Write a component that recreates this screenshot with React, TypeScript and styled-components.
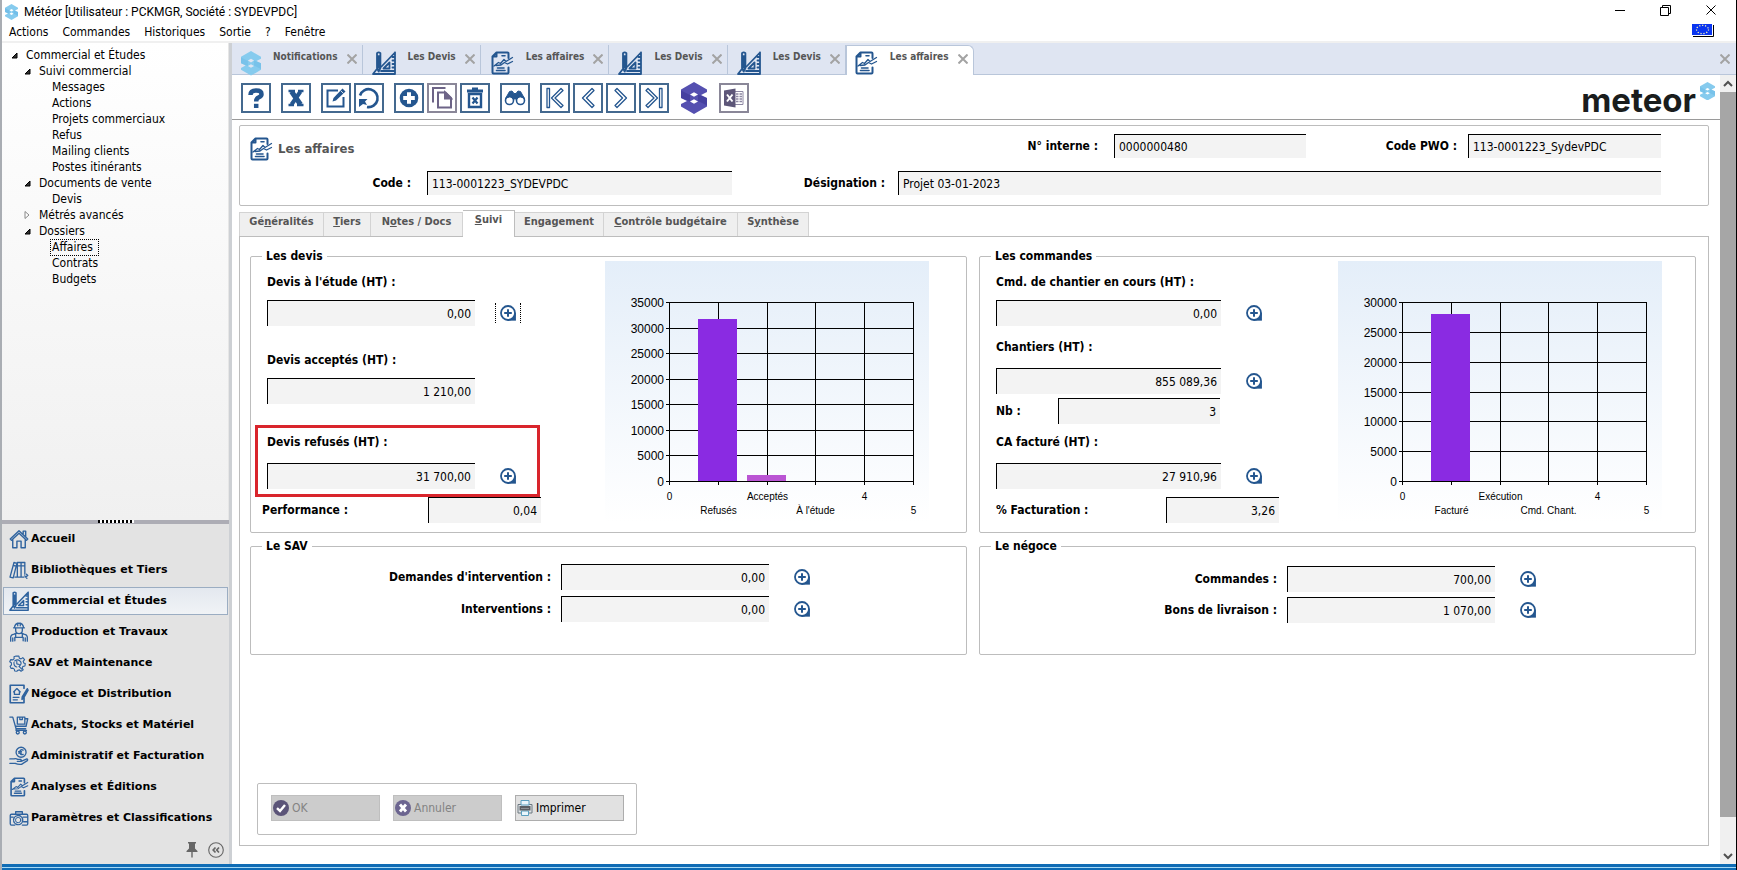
import React, { useId, useState } from "react";
import styled, { createGlobalStyle, css } from "styled-components";

const BLUE = "#24568f";
const LINE = "#bdbdbd";
const UI_FONT = '"DejaVu Sans Condensed", "DejaVu Sans", Tahoma, sans-serif';

const GlobalStyle = createGlobalStyle`
  * { box-sizing: border-box; }
  body {
    margin: 0;
    background: #fff;
    color: #000;
    font-family: ${UI_FONT};
    font-size: 12px;
    line-height: 16px;
  }
  button, input { font: inherit; color: inherit; }
  button { margin: 0; padding: 0; border: 0; background: none; cursor: pointer; }
  a { color: inherit; text-decoration: none; }
  svg { display: block; flex: none; }
`;

/* ---------- Icons ---------- */

type IconProps = { size?: number; color?: string };

const BrandMark = ({ width, color, dark }: { width: number; color: string; dark: string }) => (
  <svg width={width} viewBox="0 0 26 32" aria-hidden="true">
    <path fill={color} fillRule="evenodd" d="M13 0 26 7.5V10L20 13 26 16V24.5L13 32 0 24.5V22L6 19 0 16V7.5ZM9 12.5 13 14.8 17 12.5 13 10.200ZM9 19.5 13 21.800 17 19.5 13 17.200Z" />
    <path fill={dark} d="M0 8.500 9 13V19.500L0 16ZM26 23.500 17 19V12.500L26 16Z" opacity=".5" />
  </svg>
);

const Glyph = ({ size = 24, color = BLUE, w = 1.8, children }: IconProps & { w?: number; children: React.ReactNode }) => (
  <svg
    width={size}
    height={size}
    viewBox="0 0 24 24"
    fill="none"
    stroke={color}
    strokeWidth={w}
    strokeLinejoin="round"
    strokeLinecap="round"
    aria-hidden="true"
  >
    {children}
  </svg>
);

const SquareIcon = (p: IconProps) => (
  <Glyph {...p}>
    <path d="M5 2.2Q6.7.6 8.4 2.2V17L6.7 20.5 5 17ZM5 5.2h3.4M5 16.5h3.4M6.7 6v10" />
    <path d="M23 1.5V23H1L4.5 18.5M9.5 15.5 23 1.5M20.5 6h2M20.5 9.5h2M20.5 13h2M20.5 16.5h2M9 20h14" />
    <path d="M17.5 11.5v6h-6Z" />
  </Glyph>
);

const AnalysisIcon = (p: IconProps) => (
  <Glyph {...p} w={1.600}>
    <path d="M18.500 7V2.500Q18.500 1.500 17.500 1.500H6.500L2.500 5.500V21.500Q2.500 22.500 3.500 22.500H17.500Q18.500 22.500 18.500 21.500V16.500M3 5.500H6.500V1.500" strokeWidth="2" />
    <path d="M12 4.800H15M6.500 19.500H15M7.500 17H14" strokeWidth="1.600" />
    <path d="M4 15 8.500 11.500 10.500 12.500 14 8.500 16 10.500 22.500 6.500M6 14.500 11 14 14.500 11.500 17.500 13 22.500 10.500" strokeWidth="1.300" />
  </Glyph>
);

const HomeIcon = (p: IconProps) => (
  <Glyph {...p} w={1.7}>
    <path d="M1.5 12 12 2 22.5 12 21 13.5 12 5 3 13.5ZM4.5 12.5V22.5H9.5V14.5H14.5V22.5H19.5V12.5M17 6V2.5H20V9" />
  </Glyph>
);

const BooksIcon = (p: IconProps) => (
  <Glyph {...p} w={1.6}>
    <path d="M6 3 9.5 4 5 21.5 1.2 20.5ZM10 3H14.5V20.5H10ZM14.5 3H19V17M14.5 20.5H18M10 7H19M5 6.5l3.7 1M7 20.5H10" />
    <path d="M19 19l2.5 3M21 17l1.5 1.5L20 20.5" />
  </Glyph>
);

const WorkerIcon = (p: IconProps) => (
  <Glyph {...p} w={1.6}>
    <path d="M6.5 7Q7 1.5 12 1.5T17.500 7ZM5.500 7H18.500M8 7.500V10Q8 14 12 14T16 10V7.500M10.500 1.500V4.500M13.500 1.500V4.500" />
    <path d="M2 23V18Q2.500 15 6 14.500L9 13.500M22 23V18Q21.500 15 18 14.500L15 13.500M8 14.500V18.500H16V14.500M7 18.500V22.500M17 18.500V22.500M4.500 19v4M19.500 19v4" />
  </Glyph>
);

const GearIcon = (p: IconProps) => (
  <Glyph {...p} w={1.6}>
    <path d="M10 1.500H14L14.600 4.500 17 5.500 19.500 3.800 22 6.500 20 9 21 11.500 23 12 22.500 15.500 19.800 16 18.500 18.500 20 21 17 23 14.800 21 12.500 21.500 11 23 8 22.500 7.500 20 5.500 18.500 3 19 1.500 16 3.500 14 3.300 11 1 9.500 2.500 6.500 5.500 6.800 7.300 5 7 2.500Z" />
    <path d="M8 8.500Q12 5.500 15.500 8.500T15 15.500M7 10.500Q6.500 15.500 11 17M11 9V12.500L14.500 13.500M14 16l4 4" />
  </Glyph>
);

const ContractIcon = (p: IconProps) => (
  <Glyph {...p} w={1.6}>
    <path d="M18 5V1.500H1.500V22.500H18V17" strokeWidth="2" />
    <path d="M5.500 9.500 9.500 5.500 13.500 9.500M6.500 9V12.500H12.500V9M5 16H12M5 19H10" />
    <path d="M22 5.500 23 7.500 17.500 17 15.500 18.500 15.800 15.500Z" fill={p.color ?? BLUE} />
  </Glyph>
);

const CartIcon = (p: IconProps) => (
  <Glyph {...p} w={1.6}>
    <path d="M1 2.500H4.500L8.500 16.500H20M7.500 13.500H20.500L22.500 4.500H20M10 2.500H19V11H10ZM13 2.500V5.500H16V2.500M8.500 16.500V18.500H21" />
    <circle cx="10.500" cy="21" r="1.800" />
    <circle cx="19" cy="21" r="1.800" />
  </Glyph>
);

const CoinHandIcon = (p: IconProps) => (
  <Glyph {...p} w={1.6}>
    <circle cx="14.500" cy="7.500" r="6" />
    <path d="M17 5Q14 3.500 12.800 7 13.500 11.500 17 10M11.500 6.800H15M11.500 8.500H15" />
    <path d="M1 15.500H6Q8 14.500 10.500 16H14Q15.500 17.500 13.500 18.500H10M14.500 18.500 21.500 15.500Q23 16 22 17.500L15 22Q11 22.500 7.500 20.800H1" />
  </Glyph>
);

const SettingsCaseIcon = (p: IconProps) => (
  <Glyph {...p} w={1.600}>
    <path d="M8 7.500V4.500H16V7.500M7 20.500H3Q1.500 20.500 1.500 19V9Q1.500 7.500 3 7.500H21Q22.500 7.500 22.500 9V19Q22.500 20.500 21 20.500H16M1.500 11H5M17 11H22.500M17.500 16.500H22.500" />
    <circle cx="11" cy="14.500" r="5.500" strokeDasharray="3 1.300" />
    <circle cx="11" cy="14.500" r="3.200" strokeWidth="1.200" />
  </Glyph>
);

const CloseGlyph = ({ size = 10, color = "#a3a3a3", w = 2 }: IconProps & { w?: number }) => (
  <svg width={size} height={size} viewBox="0 0 10 10" stroke={color} strokeWidth={w} aria-hidden="true">
    <path d="M.5.5 9.500 9.500M9.500.500.500 9.500" />
  </svg>
);

const ZoomPlusIcon = () => (
  <svg width="16" height="16" viewBox="0 0 16 16" aria-hidden="true">
    <path d="M8 15.200H15.800V8Z" fill={BLUE} stroke={BLUE} strokeWidth=".8" strokeLinejoin="round" />
    <circle cx="8" cy="8" r="7" fill="#fff" stroke={BLUE} strokeWidth="1.800" />
    <path d="M8 4.200V11.800M4.200 8H11.800" stroke={BLUE} strokeWidth="2" />
  </svg>
);

/* ---------- Window frame ---------- */

const Window = styled.div`
  display: flex;
  flex-direction: column;
  min-height: 100vh;
  border-left: 2px solid #a9adb3;
  border-right: 1px solid #000;
  background: #fff;
`;

const TitleBar = styled.header`
  display: flex;
  align-items: center;
  height: 24px;
  padding: 0 14px 0 3px;
  gap: 6px;
  font-family: Roboto, "Segoe UI", sans-serif;
`;

const WindowTitle = styled.h1`
  flex: 1;
  margin: 0;
  font-size: 12px;
  font-weight: 400;
`;

const WindowButtons = styled.div`
  display: flex;
  align-items: center;
  gap: 35px;
  padding: 0 6px 4px 0;
`;

const PlainButton = styled.button`
  display: grid;
  place-items: center;
`;

const MenuBar = styled.nav`
  display: flex;
  align-items: flex-start;
  justify-content: space-between;
  height: 17px;
  padding: 0 22px 0 7px;
`;

const MenuList = styled.div`
  display: flex;
  gap: 14px;
`;

const Body = styled.div`
  display: flex;
  flex: 1;
  border-top: 2px solid #f0f0f0;
`;

const StatusEdge = styled.footer`
  height: 6px;
  border: solid #0f6cb5;
  border-width: 3px 0 2px;
  background: #a5d8f5;
`;

/* ---------- Sidebar ---------- */

const Sidebar = styled.aside`
  display: flex;
  flex-direction: column;
  flex: none;
  width: 230px;
  border-right: 3px solid #cdd0d4;
`;

const TreePane = styled.div`
  flex: 1;
  padding: 4px 0;
  border-right: 1px solid #e6e6e6;
  background: linear-gradient(#fff, #f0f0f0);
`;

const TreeList = styled.ul`
  margin: 0;
  padding: 0;
  list-style: none;
`;

const TreeItem = styled.a<{ $level: number; $current?: boolean }>`
  display: flex;
  align-items: center;
  width: max-content;
  height: 16px;
  padding-left: ${(p) => 8 + p.$level * 13}px;
  span {
    padding: 0 5px 0 1px;
    line-height: 15px;
    outline: ${(p) => (p.$current ? "1px dotted #000" : "none")};
  }
`;

const TreeArrow = styled.svg`
  width: 8px;
  height: 8px;
  margin-right: 7px;
`;

const ArrowSpace = styled.i`
  width: 15px;
`;

const Splitter = styled.div`
  display: flex;
  justify-content: center;
  height: 4px;
  background: #adadb5;
  &::after {
    content: "";
    width: 36px;
    height: 3px;
    background: repeating-linear-gradient(100deg, #000 0 2px, #fff 2px 4px);
  }
`;

const ModuleList = styled.nav`
  display: flex;
  flex-direction: column;
  gap: 3px;
  padding-top: 1px;
  background: #e3e3e3;
`;

const ModuleLink = styled.a<{ $active?: boolean }>`
  display: flex;
  align-items: center;
  gap: 2px;
  height: 28px;
  margin: 0 1px;
  padding-left: 5px;
  border: 1px solid transparent;
  font-family: "DejaVu Sans", Verdana, sans-serif;
  font-size: 11px;
  font-weight: 700;
  ${(p) =>
    p.$active &&
    css`
      border-color: #9badc2;
      background: linear-gradient(#e3e8ef, #f0f3f6);
    `}
`;

const ModuleFooter = styled.div`
  display: flex;
  justify-content: flex-end;
  align-items: center;
  gap: 10px;
  height: 32px;
  padding: 4px 5px 0;
  background: #e3e3e3;
`;

/* ---------- Workspace ---------- */

const Workspace = styled.main`
  display: flex;
  flex: 1;
  flex-direction: column;
  min-width: 0;
`;

const DocTabs = styled.div`
  display: flex;
  align-items: stretch;
  height: 32px;
  padding-right: 6px;
  border-bottom: 1px solid #b9c6da;
  background: #dfe5f2;
`;

const DocTab = styled.div<{ $active?: boolean }>`
  display: flex;
  align-items: flex-start;
  margin-top: 2px;
  padding: 5px 5px 0 9px;
  border-right: 1px solid #b9c6da;
  ${(p) =>
    p.$active &&
    css`
      margin-bottom: -1px;
      border: 1px solid #b9c6da;
      border-bottom: 0;
      border-radius: 0 6px 0 0;
      padding: 4px 5px 0 7px;
      background: #fff;
    `}
`;

const DocTabTitle = styled.a`
  display: flex;
  gap: 12px;
  color: #555;
  font-size: 10px;
  font-weight: 700;
  line-height: 14px;
  svg { margin-top: 1px; }
`;

const DocTabClose = styled(PlainButton)`
  margin: 4px 0 0 9px;
`;

const DocTabsEnd = styled(PlainButton)`
  align-self: center;
  margin-left: auto;
`;

const Content = styled.div`
  display: flex;
  flex: 1;
`;

const Page = styled.div`
  display: flex;
  flex: 1;
  flex-direction: column;
  min-width: 0;
`;

const Toolbar = styled.div`
  display: flex;
  align-items: center;
  gap: 10px;
  height: 45px;
  padding: 1px 5px 0 9px;
  border-bottom: 1px solid #9a9a9a;
`;

const ToolGroup = styled.div`
  display: flex;
  gap: 3px;
`;

const ToolButton = styled.button<{ $muted?: boolean }>`
  display: grid;
  place-items: center;
  width: 30px;
  height: 30px;
  border: 2px solid ${(p) => (p.$muted ? "#8a8798" : "#44698f")};
  background: #fff;
`;

const BrandButton = styled(PlainButton)`
  width: 30px;
`;

const Logo = styled.div`
  display: flex;
  align-items: flex-start;
  gap: 4px;
  margin: 4px 0 0 auto;
  color: #1a1d1d;
  font: 700 33px/36px Inter, sans-serif;
`;

const ScrollTrack = styled.div`
  display: flex;
  flex: none;
  flex-direction: column;
  width: 16px;
  background: #f0f0f0;
  button { height: 17px; }
`;

const ScrollThumb = styled.div`
  flex: 1;
  margin-bottom: 30px;
  background: #a6a6a6;
`;

const HeaderCard = styled.section`
  margin: 5px 11px 0 7px;
  padding: 8px 47px 10px 9px;
  border: 1px solid ${LINE};
  border-radius: 2px;
`;

const HeaderRow = styled.div<{ $top?: number }>`
  display: flex;
  align-items: center;
  height: 24px;
  margin-top: ${(p) => p.$top ?? 0}px;
`;

const HeaderTitle = styled.h2`
  display: flex;
  flex: 1;
  align-items: center;
  gap: 5px;
  margin: 6px 0 0;
  color: #555;
  font-size: 13px;
`;

const Label = styled.label<{ $width?: number; $align?: string }>`
  display: block;
  flex: none;
  width: ${(p) => (p.$width ? `${p.$width}px` : "auto")};
  text-align: ${(p) => p.$align ?? "left"};
  font-weight: 700;
`;

const Field = styled.input<{ $width?: number; $tall?: boolean; $left?: number; $numeric?: boolean }>`
  flex: ${(p) => (p.$width ? "none" : 1)};
  width: ${(p) => (p.$width ? `${p.$width}px` : "auto")};
  min-width: 0;
  height: ${(p) => (p.$tall ? 26 : 24)}px;
  margin-left: ${(p) => p.$left ?? 0}px;
  padding: 1px 4px 0;
  border: solid #000;
  border-width: 1px 0 0 1px;
  border-radius: 0;
  outline: 0;
  background: #f3f3f3;
  text-align: ${(p) => (p.$numeric ? "right" : "left")};
`;

const PageTabs = styled.div`
  display: flex;
  align-items: flex-end;
  margin: 4px 11px 0 7px;
`;

const PageTab = styled.button<{ $width: number; $active?: boolean }>`
  width: ${(p) => p.$width}px;
  height: 24px;
  padding-bottom: 6px;
  border: 1px solid #d3d3d3;
  border-width: 1px 1px 0 0;
  background: #efefef;
  color: #555;
  font-size: 11px;
  font-weight: 700;
  white-space: nowrap;
  &:first-child { border-left-width: 1px; }
  ${(p) =>
    p.$active &&
    css`
      position: relative;
      height: 27px;
      margin-bottom: -1px;
      padding-bottom: 9px;
      border-color: ${LINE};
      background: #fff;
    `}
`;

const PagePanel = styled.div`
  display: flex;
  flex: 1;
  flex-direction: column;
  margin: 0 11px 18px 7px;
  padding: 11px 12px 10px 10px;
  border: 1px solid ${LINE};
`;

const GroupGrid = styled.div`
  display: grid;
  grid-template-columns: 1fr 1fr;
  gap: 5px 12px;
`;

const Group = styled.fieldset<{ $tall?: boolean }>`
  display: flex;
  min-width: 0;
  min-height: ${(p) => (p.$tall ? 285 : 117)}px;
  margin: 0;
  padding: 0;
  border: 1px solid ${LINE};
  border-radius: 2px;
`;

const Legend = styled.legend`
  margin-left: 11px;
  padding: 0 4px;
  font-weight: 700;
`;

const AmountColumn = styled.div<{ $width: number }>`
  flex: none;
  width: ${(p) => p.$width}px;
  padding: 10px 0 0 16px;
`;

const Amount = styled.div<{ $top?: number; $marked?: boolean }>`
  position: relative;
  margin-top: ${(p) => p.$top ?? 0}px;
  ${(p) =>
    p.$marked &&
    css`
      &::after {
        content: "";
        position: absolute;
        inset: -9px 65px -8px -12px;
        border: 3px solid #d9252c;
        pointer-events: none;
      }
    `}
`;

const AmountLine = styled.div<{ $top?: number }>`
  display: flex;
  align-items: center;
  gap: 20px;
  margin-top: ${(p) => p.$top ?? 0}px;
`;

const InlineAmount = styled.div<{ $top?: number; $shift?: boolean }>`
  display: flex;
  align-items: center;
  margin-top: ${(p) => p.$top ?? 0}px;
  margin-left: ${(p) => (p.$shift ? -5 : 0)}px;
`;

const DetailButton = styled.button<{ $focused?: boolean }>`
  display: grid;
  place-items: center;
  width: 26px;
  height: 20px;
  border: dotted ${(p) => (p.$focused ? "#000" : "transparent")};
  border-width: 0 1px;
`;

const LinePanel = styled.div<{ $top: number; $gap: number }>`
  display: flex;
  flex: 1;
  flex-direction: column;
  gap: ${(p) => p.$gap}px;
  padding-top: ${(p) => p.$top}px;
`;

const Line = styled.div`
  display: flex;
  align-items: center;
  gap: 10px;
  button { margin-left: 10px; }
`;

const ChartSvg = styled.svg`
  margin-top: -3px;
  font-family: "Liberation Sans", Arial, sans-serif;
`;

const ActionBar = styled.div`
  display: flex;
  align-self: flex-start;
  gap: 13px;
  margin-top: auto;
  margin-left: 7px;
  padding: 11px 12px 13px 13px;
  border: 1px solid ${LINE};
  border-radius: 2px;
`;

const ActionButton = styled.button`
  display: flex;
  align-items: center;
  gap: 3px;
  width: 109px;
  height: 26px;
  padding-left: 1px;
  border: 1px solid #adadad;
  background: #e1e1e1;
  &:disabled {
    border-color: #bfbfbf;
    background: #ccc;
    color: #838383;
  }
`;

/* ---------- Data ---------- */

type Node = { label: string; level: number; open?: boolean; current?: boolean };

const tree: Node[] = [
  { label: "Commercial et Études", level: 0, open: true },
  { label: "Suivi commercial", level: 1, open: true },
  { label: "Messages", level: 2 },
  { label: "Actions", level: 2 },
  { label: "Projets commerciaux", level: 2 },
  { label: "Refus", level: 2 },
  { label: "Mailing clients", level: 2 },
  { label: "Postes itinérants", level: 2 },
  { label: "Documents de vente", level: 1, open: true },
  { label: "Devis", level: 2 },
  { label: "Métrés avancés", level: 1, open: false },
  { label: "Dossiers", level: 1, open: true },
  { label: "Affaires", level: 2, current: true },
  { label: "Contrats", level: 2 },
  { label: "Budgets", level: 2 },
];

const modules = [
  { label: "Accueil", Icon: HomeIcon },
  { label: "Bibliothèques et Tiers", Icon: BooksIcon },
  { label: "Commercial et Études", Icon: SquareIcon, active: true },
  { label: "Production et Travaux", Icon: WorkerIcon },
  { label: "SAV et Maintenance", Icon: GearIcon, size: 17 },
  { label: "Négoce et Distribution", Icon: ContractIcon },
  { label: "Achats, Stocks et Matériel", Icon: CartIcon },
  { label: "Administratif et Facturation", Icon: CoinHandIcon },
  { label: "Analyses et Éditions", Icon: AnalysisIcon },
  { label: "Paramètres et Classifications", Icon: SettingsCaseIcon },
];

const docTabs = [
  { label: "Notifications", kind: "brand" },
  { label: "Les Devis", kind: "square" },
  { label: "Les affaires", kind: "analysis" },
  { label: "Les Devis", kind: "square" },
  { label: "Les Devis", kind: "square" },
  { label: "Les affaires", kind: "analysis" },
];

const pageTabs: { text: [string, string, string]; width: number }[] = [
  { text: ["Gé", "n", "éralités"], width: 85 },
  { text: ["", "T", "iers"], width: 47 },
  { text: ["N", "o", "tes / Docs"], width: 92 },
  { text: ["", "S", "uivi"], width: 52 },
  { text: ["En", "g", "agement"], width: 89 },
  { text: ["", "C", "ontrôle budgétaire"], width: 134 },
  { text: ["S", "y", "nthèse"], width: 71 },
];

/* ---------- Parts ---------- */

const DocIcon = ({ kind }: { kind: string }) => {
  if (kind === "brand") return <BrandMark width={20} color="#86cbee" dark="#6ab9e6" />;
  return kind === "square" ? <SquareIcon size={24} /> : <AnalysisIcon size={24} />;
};

const Detail = ({ name, focused }: { name: string; focused?: boolean }) => (
  <DetailButton type="button" aria-label={`Détail : ${name}`} $focused={focused}>
    <ZoomPlusIcon />
  </DetailButton>
);

type AmountProps = {
  label: string;
  value: string;
  width: number;
  top?: number;
  gap?: number;
  marked?: boolean;
  detail?: boolean;
  focused?: boolean;
};

const AmountField = ({ label, value, width, top, gap = 10, marked, detail, focused }: AmountProps) => {
  const id = useId();
  return (
    <Amount $top={top} $marked={marked}>
      <Label htmlFor={id}>{label} :</Label>
      <AmountLine $top={gap}>
        <Field id={id} readOnly value={value} $width={width} $tall $numeric />
        {detail && <Detail name={label} focused={focused} />}
      </AmountLine>
    </Amount>
  );
};

type InlineProps = { label: string; value: string; labelWidth: number; width: number; top?: number; shift?: boolean };

const InlineField = ({ label, value, labelWidth, width, top, shift }: InlineProps) => {
  const id = useId();
  return (
    <InlineAmount $top={top} $shift={shift}>
      <Label htmlFor={id} $width={labelWidth}>{label} :</Label>
      <Field id={id} readOnly value={value} $width={width} $tall $numeric />
    </InlineAmount>
  );
};

const LineField = ({ label, value, labelWidth }: { label: string; value: string; labelWidth: number }) => {
  const id = useId();
  return (
    <Line>
      <Label htmlFor={id} $width={labelWidth} $align="right">{label} :</Label>
      <Field id={id} readOnly value={value} $width={208} $tall $numeric />
      <Detail name={label} />
    </Line>
  );
};

type ChartProps = { max: number; labels: string[]; bars: { value: number; color: string }[] };

const BarChart = ({ max, labels, bars }: ChartProps) => {
  const gradient = useId();
  const left = 64;
  const right = 308;
  const top = 41;
  const bottom = 220;
  const xAt = (i: number) => Math.round(left + ((right - left) * i) / 5) + 0.5;
  const yAt = (v: number) => Math.round(bottom - ((bottom - top) * v) / max) + 0.5;
  const steps = Array.from({ length: max / 5000 + 1 }, (_, i) => i * 5000);
  return (
    <ChartSvg width="324" height="262" viewBox="0 0 324 262" role="img" aria-label={labels.join(", ")}>
      <defs>
        <linearGradient id={gradient} x1="0" y1="0" x2="0" y2="1">
          <stop offset="0" stopColor="#e4eef9" />
          <stop offset="1" stopColor="#fff" />
        </linearGradient>
      </defs>
      <rect width="324" height="262" fill={`url(#${gradient})`} />
      <g stroke="#000" strokeWidth="1">
        {steps.map((v) => (
          <line key={v} x1={left - 3} x2={right + 1} y1={yAt(v)} y2={yAt(v)} />
        ))}
        {labels.map((_, i) => (
          <line key={i} x1={xAt(i)} x2={xAt(i)} y1={top} y2={bottom + 4} />
        ))}
      </g>
      {bars.map((b, i) => (
        <rect key={i} x={xAt(i + 1) - 20.5} width="39" y={yAt(b.value) - 0.5} height={bottom - yAt(b.value) + 0.5} fill={b.color} />
      ))}
      <g fontSize="12" textAnchor="end">
        {steps.map((v) => (
          <text key={v} x="59" y={yAt(v) + 4}>{v}</text>
        ))}
      </g>
      <g fontSize="10" textAnchor="middle">
        {labels.map((t, i) => (
          <text key={i} x={xAt(i)} y={i % 2 ? 253 : 239}>{t}</text>
        ))}
      </g>
    </ChartSvg>
  );
};

const SidebarTree = () => (
  <TreePane>
    <TreeList>
      {tree.map((n) => (
        <li key={n.label}>
          <TreeItem href="#" $level={n.level} $current={n.current}>
            {n.open === undefined ? (
              <ArrowSpace />
            ) : (
              <TreeArrow viewBox="0 0 8 8" aria-hidden="true">
                {n.open ? <path d="M7 2V7H2Z" fill="#333" stroke="#000" /> : <path d="M2 .500 6 4 2 7.500Z" fill="#fff" stroke="#888" />}
              </TreeArrow>
            )}
            <span>{n.label}</span>
          </TreeItem>
        </li>
      ))}
    </TreeList>
  </TreePane>
);

const ChevronShape = ({ dir, bar }: { dir: "left" | "right"; bar?: boolean }) => (
  <svg width="24" height="24" viewBox="0 0 24 24" fill="#fff" stroke={BLUE} strokeWidth="1.300" strokeLinejoin="round" aria-hidden="true">
    <g transform={dir === "right" ? "matrix(-1 0 0 1 24 0)" : undefined}>
      <path d={bar ? "M18 2.500 20 4.500 12 12 20 19.500 18 21.500 8.500 12Z" : "M16 2.500 18 4.500 10.500 12 18 19.500 16 21.500 6.500 12Z"} />
      {bar && <path d="M4 2.500H6.500V21.500H4Z" />}
    </g>
  </svg>
);

const MainToolbar = () => (
  <Toolbar role="toolbar">
    <ToolButton type="button" aria-label="Aide">
      <svg width="20" height="22" viewBox="0 0 20 22" fill="none" stroke={BLUE} strokeWidth="4.500">
        <path d="M4.500 8Q4.500 3.500 10 3.500T15.500 7.200Q15.500 9.200 12.500 10.500 10.200 11.500 10.200 14.500" />
        <path d="M10.200 16.800V21" />
      </svg>
    </ToolButton>
    <ToolButton type="button" aria-label="Fermer">
      <svg width="18" height="18" viewBox="0 0 18 18" stroke={BLUE}>
        <path d="M4.500 2.500 13.500 15.500" strokeWidth="5" />
        <path d="M13.500 2.500 4.500 15.500" strokeWidth="4" />
        <path d="M1.500 2H8M11 2H16.500M1.500 16H7M10 16H16.500" strokeWidth="2.500" />
      </svg>
    </ToolButton>
    <ToolGroup>
      <ToolButton type="button" aria-label="Modifier">
        <svg width="22" height="22" viewBox="0 0 22 22" fill="none" stroke={BLUE} strokeWidth="2">
          <path d="M13 3.500H2.500V19.500H18.500V10" />
          <path d="M17.500 1.500 20.500 4.500 11 13.500 7.500 14.500 8.500 11Z" fill={BLUE} stroke="none" />
          <path d="M16 4 18.500 6.500" stroke="#fff" strokeWidth=".8" />
        </svg>
      </ToolButton>
      <ToolButton type="button" aria-label="Actualiser">
        <svg width="24" height="24" viewBox="0 0 24 24" fill="none" stroke={BLUE} strokeWidth="2.600">
          <path d="M3 9.500A9 9 0 1 1 10 21" />
          <path d="M2 13H10.500L8 15.500 10 19 6 18 2 21Z" fill={BLUE} stroke="none" />
        </svg>
      </ToolButton>
    </ToolGroup>
    <ToolGroup>
      <ToolButton type="button" aria-label="Ajouter">
        <svg width="20" height="20" viewBox="0 0 20 20">
          <circle cx="10" cy="10" r="9.300" fill={BLUE} />
          <path d="M10 4.200V15.800M4.200 10H15.800" stroke="#fff" strokeWidth="4" />
        </svg>
      </ToolButton>
      <ToolButton type="button" aria-label="Dupliquer" $muted>
        <svg width="22" height="24" viewBox="0 0 22 24" fill="none" stroke="#6d6487" strokeWidth="2">
          <path d="M2 16.500V2H14.500" />
          <path d="M7 6.500H14.500L20 12V21.500H7Z" />
          <path d="M14 6.500V12.500H20Z" fill="#6d6487" />
        </svg>
      </ToolButton>
      <ToolButton type="button" aria-label="Supprimer">
        <svg width="18" height="22" viewBox="0 0 18 22" fill="none" stroke={BLUE}>
          <path d="M1 4H17M6 2H12" strokeWidth="3" />
          <path d="M3 7H15V20H3Z" strokeWidth="2.400" />
          <path d="M6.500 10.500 11.500 16.500M11.500 10.500 6.500 16.500" strokeWidth="2.200" />
        </svg>
      </ToolButton>
    </ToolGroup>
    <ToolButton type="button" aria-label="Rechercher">
      <svg width="22" height="18" viewBox="0 0 22 18" fill="none" stroke={BLUE} strokeWidth="1.600">
        <circle cx="5.500" cy="11.500" r="4" />
        <circle cx="16.500" cy="11.500" r="4" />
        <path d="M1.500 9.500 5.500 2.500 8 2 10 4.500H12L14 2 16.500 2.500 20.500 9.500 16 7.500 12.500 10H9.500L6 7.500Z" fill={BLUE} strokeWidth="1" />
      </svg>
    </ToolButton>
    <ToolGroup>
      <ToolButton type="button" aria-label="Premier"><ChevronShape dir="left" bar /></ToolButton>
      <ToolButton type="button" aria-label="Précédent"><ChevronShape dir="left" /></ToolButton>
      <ToolButton type="button" aria-label="Suivant"><ChevronShape dir="right" /></ToolButton>
      <ToolButton type="button" aria-label="Dernier"><ChevronShape dir="right" bar /></ToolButton>
    </ToolGroup>
    <BrandButton type="button" aria-label="Sydev">
      <BrandMark width={26} color="#5550b0" dark="#37328f" />
    </BrandButton>
    <ToolButton type="button" aria-label="Exporter vers Excel" $muted>
      <svg width="20" height="20" viewBox="0 0 20 20">
        <path d="M10.500 3.500H19V16.500H10.500Z" fill="#fff" stroke="#8d87a3" />
        <path d="M12 6H14.500M15.500 6H18M12 8.500H14.500M15.500 8.500H18M12 11H14.500M15.500 11H18M12 13.500H14.500M15.500 13.500H18" stroke="#8d87a3" strokeWidth="1.500" />
        <path d="M0 2.500 11.500 .500V19.500L0 17.500Z" fill="#5d5678" />
        <path d="M3 6.500 8.500 13.500M8.500 6.500 3 13.500" stroke="#fff" strokeWidth="2" />
      </svg>
    </ToolButton>
    <Logo>
      meteor
      <BrandMark width={15} color="#86cbee" dark="#6ab9e6" />
    </Logo>
  </Toolbar>
);

const EuroFlag = () => (
  <svg width="22" height="13" viewBox="0 0 22 13" aria-hidden="true">
    <path d="M1 12.500H21.500V1" fill="none" stroke="#000" />
    <rect width="20" height="11" fill="#0a35f0" />
    <ellipse cx="10.500" cy="5.500" rx="6" ry="4.200" fill="none" stroke="#fff7b0" strokeWidth="1.200" strokeDasharray="1.200 1.700" />
  </svg>
);

/* ---------- App ---------- */

export default function App() {
  const [tab, setTab] = useState(3);
  return (
    <Window>
      <GlobalStyle />
      <TitleBar>
        <BrandMark width={13} color="#86cbee" dark="#5db2e4" />
        <WindowTitle>Météor [Utilisateur : PCKMGR, Société : SYDEVPDC]</WindowTitle>
        <WindowButtons>
          <PlainButton type="button" aria-label="Réduire">
            <svg width="10" height="10" viewBox="0 0 10 10"><path d="M0 5.500H10" stroke="#000" /></svg>
          </PlainButton>
          <PlainButton type="button" aria-label="Restaurer">
            <svg width="11" height="11" viewBox="0 0 11 11" fill="none" stroke="#000"><path d="M.5 2.500H8.500V10.500H.5ZM2.500 2.500V.5H10.500V8.500H8.500" /></svg>
          </PlainButton>
          <PlainButton type="button" aria-label="Quitter">
            <CloseGlyph size={10} color="#000" w={1} />
          </PlainButton>
        </WindowButtons>
      </TitleBar>
      <MenuBar>
        <MenuList>
          {["Actions", "Commandes", "Historiques", "Sortie", "?", "Fenêtre"].map((m) => (
            <PlainButton key={m} type="button">{m}</PlainButton>
          ))}
        </MenuList>
        <EuroFlag />
      </MenuBar>
      <Body>
        <Sidebar>
          <SidebarTree />
          <Splitter />
          <ModuleList>
            {modules.map(({ label, Icon, active, size }) => (
              <ModuleLink key={label} href="#" $active={active}>
                <Icon size={size ?? 20} color="#2f639f" />
                {label}
              </ModuleLink>
            ))}
          </ModuleList>
          <ModuleFooter>
            <PlainButton type="button" aria-label="Épingler">
              <svg width="12" height="16" viewBox="0 0 12 16" fill="#666"><path d="M2 0H10V1.500H9V6.500L11.500 9V10H6.700V15.500H5.300V10H.5V9L3 6.500V1.500H2Z" /></svg>
            </PlainButton>
            <PlainButton type="button" aria-label="Replier">
              <svg width="16" height="16" viewBox="0 0 16 16" fill="none" stroke="#666">
                <circle cx="8" cy="8" r="7.300" strokeWidth="1.100" />
                <path d="M7.500 5.500 5.200 8 7.500 10.500M11 5.500 8.700 8 11 10.500" strokeWidth="1.700" />
              </svg>
            </PlainButton>
          </ModuleFooter>
        </Sidebar>
        <Workspace>
          <DocTabs>
            {docTabs.map((t, i) => (
              <DocTab key={i} $active={i === 5}>
                <DocTabTitle href="#">
                  <DocIcon kind={t.kind} />
                  {t.label}
                </DocTabTitle>
                <DocTabClose type="button" aria-label={`Fermer ${t.label}`}>
                  <CloseGlyph />
                </DocTabClose>
              </DocTab>
            ))}
            <DocTabsEnd type="button" aria-label="Fermer l'onglet">
              <CloseGlyph />
            </DocTabsEnd>
          </DocTabs>
          <Content>
            <Page>
              <MainToolbar />
              <HeaderCard>
                <HeaderRow>
                  <HeaderTitle>
                    <AnalysisIcon size={24} />
                    Les affaires
                  </HeaderTitle>
                  <Label htmlFor="internal">N° interne :</Label>
                  <Field id="internal" readOnly value="0000000480" $width={192} $left={16} />
                  <Label htmlFor="pwo" $width={151} $align="right">Code PWO :</Label>
                  <Field id="pwo" readOnly value="113-0001223_SydevPDC" $width={193} $left={11} />
                </HeaderRow>
                <HeaderRow $top={13}>
                  <Label htmlFor="code" $width={162} $align="right">Code :</Label>
                  <Field id="code" readOnly value="113-0001223_SYDEVPDC" $width={305} $left={16} />
                  <Label htmlFor="designation" $width={153} $align="right">Désignation :</Label>
                  <Field id="designation" readOnly value="Projet 03-01-2023" $left={13} />
                </HeaderRow>
              </HeaderCard>
              <PageTabs role="tablist">
                {pageTabs.map(({ text: [before, key, after], width }, i) => (
                  <PageTab key={i} type="button" role="tab" aria-selected={i === tab} $width={width} $active={i === tab} onClick={() => setTab(i)}>
                    {before}
                    <u>{key}</u>
                    {after}
                  </PageTab>
                ))}
              </PageTabs>
              <PagePanel>
                <GroupGrid>
                  <Group $tall>
                    <Legend>Les devis</Legend>
                    <AmountColumn $width={354}>
                      <AmountField label="Devis à l'étude (HT)" value="0,00" width={208} detail focused />
                      <AmountField label="Devis acceptés (HT)" value="1 210,00" width={208} top={26} />
                      <AmountField label="Devis refusés (HT)" value="31 700,00" width={208} top={30} gap={13} marked detail />
                      <InlineField label="Performance" value="0,04" labelWidth={166} width={113} top={8} shift />
                    </AmountColumn>
                    <BarChart
                      max={35000}
                      labels={["0", "Refusés", "Acceptés", "À l'étude", "4", "5"]}
                      bars={[{ value: 31700, color: "#8a2be2" }, { value: 1210, color: "#ba55d3" }]}
                    />
                  </Group>
                  <Group $tall>
                    <Legend>Les commandes</Legend>
                    <AmountColumn $width={358}>
                      <AmountField label="Cmd. de chantier en cours (HT)" value="0,00" width={225} detail />
                      <AmountField label="Chantiers (HT)" value="855 089,36" width={225} top={13} gap={13} detail />
                      <InlineField label="Nb" value="3" labelWidth={62} width={162} top={4} />
                      <AmountField label="CA facturé (HT)" value="27 910,96" width={225} top={10} gap={13} detail />
                      <InlineField label="% Facturation" value="3,26" labelWidth={170} width={113} top={8} />
                    </AmountColumn>
                    <BarChart
                      max={30000}
                      labels={["0", "Facturé", "Exécution", "Cmd. Chant.", "4", "5"]}
                      bars={[{ value: 27911, color: "#8a2be2" }]}
                    />
                  </Group>
                  <Group>
                    <Legend>Le SAV</Legend>
                    <LinePanel $top={10} $gap={6}>
                      <LineField label="Demandes d'intervention" value="0,00" labelWidth={300} />
                      <LineField label="Interventions" value="0,00" labelWidth={300} />
                    </LinePanel>
                  </Group>
                  <Group>
                    <Legend>Le négoce</Legend>
                    <LinePanel $top={12} $gap={5}>
                      <LineField label="Commandes" value="700,00" labelWidth={297} />
                      <LineField label="Bons de livraison" value="1 070,00" labelWidth={297} />
                    </LinePanel>
                  </Group>
                </GroupGrid>
                <ActionBar>
                  <ActionButton type="button" disabled>
                    <svg width="16" height="16" viewBox="0 0 16 16">
                      <circle cx="8" cy="8" r="8" fill="#5b5478" />
                      <path d="M4 8.200 7 11 12 5" fill="none" stroke="#fff" strokeWidth="2.400" />
                    </svg>
                    OK
                  </ActionButton>
                  <ActionButton type="button" disabled>
                    <svg width="16" height="16" viewBox="0 0 16 16">
                      <circle cx="8" cy="8" r="8" fill="#6c6590" />
                      <path d="M5 4.500 11 11.500M11 4.500 5 11.500" stroke="#fff" strokeWidth="2.800" />
                    </svg>
                    Annuler
                  </ActionButton>
                  <ActionButton type="button">
                    <svg width="16" height="16" viewBox="0 0 16 16">
                      <path d="M1 4.500H15V13H1Z" fill="#dfe3e6" stroke="#6d7880" />
                      <path d="M4 .500H12V5H4ZM4.500 11H11.500V15.500H4.500Z" fill="#e9f6fc" stroke="#5a9fbf" />
                      <path d="M2.500 6H13.500V10.500H2.500Z" fill="#5a5f64" />
                      <path d="M4 8.500H12" stroke="#8c9195" />
                    </svg>
                    Imprimer
                  </ActionButton>
                </ActionBar>
              </PagePanel>
            </Page>
            <ScrollTrack>
              <PlainButton type="button" aria-label="Défiler vers le haut">
                <svg width="10" height="8" viewBox="0 0 10 8" fill="none" stroke="#505050" strokeWidth="2"><path d="M1 6 5 2 9 6" /></svg>
              </PlainButton>
              <ScrollThumb />
              <PlainButton type="button" aria-label="Défiler vers le bas">
                <svg width="10" height="8" viewBox="0 0 10 8" fill="none" stroke="#505050" strokeWidth="2"><path d="M1 2 5 6 9 2" /></svg>
              </PlainButton>
            </ScrollTrack>
          </Content>
        </Workspace>
      </Body>
      <StatusEdge />
    </Window>
  );
}
